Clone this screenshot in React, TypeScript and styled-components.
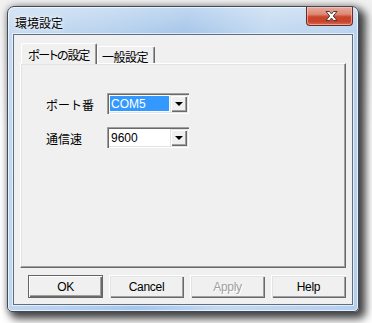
import React from "react";
import styled, { createGlobalStyle, css } from "styled-components";

const GlobalStyle = createGlobalStyle`
  html, body {
    margin: 0;
    padding: 0;
    background: #ffffff;
    width: 372px;
    height: 323px;
    overflow: hidden;
  }
  * { box-sizing: border-box; }
`;

const jp = `"Noto Sans CJK JP", "Noto Sans", sans-serif`;
const ui = `"Liberation Sans", Arial, sans-serif`;

const Page = styled.div`
  width: 372px;
  height: 323px;
  padding: 6px 0 0 7px;
  background: linear-gradient(180deg, #f0f0f0 0%, #ffffff 40%);
`;

const Window = styled.div`
  width: 352px;
  height: 306px;
  display: flex;
  flex-direction: column;
  padding: 0 5px 6px 5px;
  border: 1px solid #3f4a5a;
  border-radius: 7px 7px 5px 5px;
  background:
    linear-gradient(180deg, rgba(255,255,255,0.3) 0px, rgba(255,255,255,0) 27px),
    linear-gradient(100deg, #c6dbf1 0%, #b8d2ee 25%, #a6c6ea 45%, #c2d9f1 65%, #b4cfed 100%);
  box-shadow:
    inset 0 0 0 1px rgba(255, 255, 255, 0.65),
    0 0 6px 1px rgba(0, 0, 0, 0.22),
    5px 5px 9px 2px rgba(0, 0, 0, 0.7);
`;

const TitleBar = styled.div`
  height: 27px;
  display: flex;
  align-items: flex-start;
  justify-content: space-between;
`;

const Title = styled.span`
  font-family: ${jp};
  font-size: 12px;
  line-height: 12px;
  margin: 10px 0 0 2px;
  color: #000;
  text-shadow: 0 0 6px rgba(255, 255, 255, 0.9), 0 0 3px rgba(255, 255, 255, 0.9);
`;

const CloseButton = styled.div`
  width: 47px;
  height: 19px;
  display: flex;
  align-items: center;
  justify-content: center;
  padding-left: 3px;
  border: 1px solid #6e2a20;
  border-top: none;
  border-radius: 0 0 4px 4px;
  background: linear-gradient(180deg, #e9a99b 0%, #dd8a78 40%, #c9452c 55%, #c7432b 80%, #d66d52 100%);
  box-shadow: inset 0 0 0 1px rgba(255, 210, 200, 0.55);
`;

const Client = styled.div`
  flex: 1;
  display: flex;
  flex-direction: column;
  padding: 8px 6px 6px 6px;
  background: #f0f0f0;
  border: 1px solid #5e6e84;
  box-shadow: 0 0 0 1px rgba(255, 255, 255, 0.6);
`;

const TabStrip = styled.div`
  height: 20px;
  display: flex;
  align-items: flex-end;
  padding-left: 1px;
  position: relative;
  z-index: 1;
`;

const Tab = styled.div<{ $active?: boolean }>`
  font-family: ${jp};
  font-size: 12px;
  font-feature-settings: "palt";
  color: #000;
  display: flex;
  align-items: center;
  background: #f0f0f0;
  border-top: 1px solid #ffffff;
  border-left: 1px solid #ffffff;
  border-right: 1px solid #696969;
  box-shadow: inset -1px 0 0 #a0a0a0;
  border-radius: 2px 2px 0 0;
  ${(p) =>
    p.$active
      ? css`
          height: 21px;
          margin-bottom: -1px;
          padding: 0 7px 0 6px;
          letter-spacing: -1.2px;
        `
      : css`
          height: 17px;
          padding: 2px 6px 0 4px;
          letter-spacing: -0.5px;
        `}
`;

const Panel = styled.div`
  height: 205px;
  border-top: 1px solid #ffffff;
  border-left: 1px solid #ffffff;
  border-right: 1px solid #696969;
  border-bottom: 1px solid #696969;
  box-shadow: inset -1px -1px 0 #a0a0a0, inset 1px 1px 0 #e3e3e3;
  padding: 29px 0 0 25px;
`;

const Form = styled.div`
  display: grid;
  grid-template-columns: 61px 82px;
  grid-auto-rows: 21px;
  row-gap: 13px;
  align-items: center;
`;

const Label = styled.span`
  font-family: ${jp};
  font-size: 12px;
  line-height: 12px;
  color: #000;
  padding-top: 2px;
`;

const Combo = styled.div`
  width: 82px;
  height: 21px;
  display: flex;
  align-items: stretch;
  padding: 2px;
  background: #ffffff;
  box-shadow:
    inset 1px 1px 0 #a0a0a0,
    inset 2px 2px 0 #696969,
    inset -1px -1px 0 #ffffff,
    inset -2px -2px 0 #e3e3e3;
`;

const ComboText = styled.div<{ $selected?: boolean }>`
  flex: 1;
  display: flex;
  align-items: center;
  margin: 1px;
  padding-left: 1px;
  font-family: ${ui};
  font-size: 12px;
  color: ${(p) => (p.$selected ? "#ffffff" : "#000000")};
  background: ${(p) => (p.$selected ? "#3399ff" : "transparent")};
`;

const DropButton = styled.div`
  width: 17px;
  display: flex;
  align-items: center;
  justify-content: center;
  background: #f0f0f0;
  box-shadow:
    inset 1px 1px 0 #e3e3e3,
    inset 2px 2px 0 #ffffff,
    inset -1px -1px 0 #696969,
    inset -2px -2px 0 #a0a0a0;
`;

const Arrow = styled.span`
  width: 0;
  height: 0;
  border-left: 4px solid transparent;
  border-right: 4px solid transparent;
  border-top: 4px solid #000;
  margin-top: 1px;
`;

const ButtonRow = styled.div`
  margin-top: 7px;
  display: flex;
  justify-content: flex-end;
  gap: 6px;
`;

const Button = styled.div<{ $default?: boolean; $disabled?: boolean }>`
  width: 75px;
  height: 23px;
  display: flex;
  align-items: center;
  justify-content: center;
  font-family: ${ui};
  font-size: 12px;
  letter-spacing: -0.3px;
  background: #f0f0f0;
  color: ${(p) => (p.$disabled ? "#a0a0a0" : "#000000")};
  ${(p) =>
    p.$disabled &&
    css`
      text-shadow: 1px 1px 0 #ffffff;
    `}
  ${(p) =>
    p.$default
      ? css`
          border: 1px solid #646464;
          box-shadow:
            inset 1px 1px 0 #ffffff,
            inset -1px -1px 0 #696969,
            inset -2px -2px 0 #a0a0a0;
        `
      : css`
          box-shadow:
            inset 1px 1px 0 #ffffff,
            inset 2px 2px 0 #e3e3e3,
            inset -1px -1px 0 #696969,
            inset -2px -2px 0 #a0a0a0;
        `}
`;

const CloseGlyph = () => (
  <svg width="13" height="10" viewBox="0 0 13 10">
    <path
      d="M1 0.5 H4.5 L6.5 3 L8.5 0.5 H12 L8.3 5 L12 9.5 H8.5 L6.5 7 L4.5 9.5 H1 L4.7 5 Z"
      fill="#ffffff"
      stroke="#4a3a3a"
      strokeWidth="1"
      strokeLinejoin="round"
    />
  </svg>
);

const ComboBox = ({ value, selected }: { value: string; selected?: boolean }) => (
  <Combo>
    <ComboText $selected={selected}>{value}</ComboText>
    <DropButton>
      <Arrow />
    </DropButton>
  </Combo>
);

export default function App() {
  return (
    <>
      <GlobalStyle />
      <Page>
        <Window>
          <TitleBar>
            <Title>環境設定</Title>
            <CloseButton>
              <CloseGlyph />
            </CloseButton>
          </TitleBar>
          <Client>
            <TabStrip>
              <Tab $active>ポートの設定</Tab>
              <Tab>一般設定</Tab>
            </TabStrip>
            <Panel>
              <Form>
                <Label>ポート番</Label>
                <ComboBox value="COM5" selected />
                <Label>通信速</Label>
                <ComboBox value="9600" />
              </Form>
            </Panel>
            <ButtonRow>
              <Button $default>OK</Button>
              <Button>Cancel</Button>
              <Button $disabled>Apply</Button>
              <Button>Help</Button>
            </ButtonRow>
          </Client>
        </Window>
      </Page>
    </>
  );
}
